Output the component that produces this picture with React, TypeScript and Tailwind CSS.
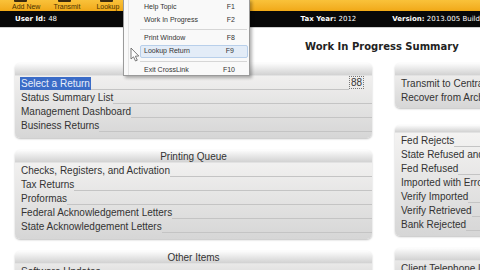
import React from 'react';

const sans = { fontFamily: '"Liberation Sans", Arial, sans-serif' };
const deja = { fontFamily: '"DejaVu Sans", Verdana, sans-serif' };

function Row({ label, right, selected }: { label: string; right?: string; selected?: boolean }) {
  return (
    <div className="flex items-end h-[14px] leading-[13px] text-[10px] text-[#333]">
      <span className={selected ? 'bg-[#3b6cc7] text-[#e8eefa] px-[1px] -ml-[1px]' : 'whitespace-nowrap'}>{label}</span>
      <div className="flex-1 self-stretch border-b border-[#c4c4c4]" />
      {right && (
        <span className="border border-dotted border-[#777] leading-[11px] px-[1px] mr-[8px] mb-[1px]">{right}</span>
      )}
    </div>
  );
}

function Panel({
  title,
  rows,
  headH = 'h-[13px]',
  pb = 'pb-[6px]',
}: {
  title?: string;
  rows: { label: string; right?: string; selected?: boolean }[];
  headH?: string;
  pb?: string;
}) {
  return (
    <div className="rounded-[5px] bg-gradient-to-b from-[#f6f5f4] to-[#d6d6d6] shadow-[0_1px_2px_rgba(0,0,0,0.25)] overflow-hidden">
      <div
        className={`${headH} bg-gradient-to-b from-[#fdfdfd] to-[#d2d2d2] flex items-center justify-center text-[10px] text-[#333] border-b border-[#e2e2e2]`}
      >
        {title}
      </div>
      <div className={`pl-[6px] ${pb}`}>
        {rows.map((r) => (
          <Row key={r.label} {...r} />
        ))}
      </div>
    </div>
  );
}

function Cursor() {
  return (
    <svg className="absolute left-[129px] top-[47px]" width="12" height="16" viewBox="0 0 12 16">
      <path d="M2 1 L2 12 L4.5 9.8 L6.5 14 L8.3 13.2 L6.4 9.2 L9.8 9 Z" fill="#fff" stroke="#555" strokeWidth="0.9" strokeLinejoin="round" opacity="0.85" />
    </svg>
  );
}

function Menu() {
  const item = 'flex items-center justify-between pl-[20px] pr-[14px] h-[12px] text-[7px] text-[#333]';
  const hot = 'flex items-center justify-between ml-[16px] mr-[1px] mt-[1px] pl-[3px] pr-[13px] h-[13px] text-[7px] text-[#333] bg-[#e3ecf7] border border-[#b8cfea] rounded-[2px]';
  return (
    <div
      className="absolute left-[123px] top-[-1px] w-[127px] h-[77px] bg-[#f9f9f9] border border-[#9a9a9a] shadow-[2px_2px_3px_rgba(0,0,0,0.3)] pt-[1px]"
      style={sans}
    >
      <div className="absolute left-[4px] top-0 bottom-0 w-[1px] bg-[#e4e4e4]" />
      <div className={item}><span>Help Topic</span><span>F1</span></div>
      <div className={`${item} mt-[1px]`}><span>Work In Progress</span><span>F2</span></div>
      <div className="ml-[16px] mr-[2px] my-[2.5px] h-[1px] bg-[#d6d6d6]" />
      <div className={item}><span>Print Window</span><span>F8</span></div>
      <div className={hot}>
        <span>Lookup Return</span><span>F9</span>
      </div>
      <div className="ml-[16px] mr-[2px] my-[2.5px] h-[1px] bg-[#d6d6d6]" />
      <div className={item}><span>Exit CrossLink</span><span>F10</span></div>
    </div>
  );
}

export default function App() {
  return (
    <div className="relative w-[480px] h-[270px] overflow-hidden bg-white" style={sans}>
      {/* toolbar */}
      <div className="h-[11px] bg-gradient-to-b from-[#f9c23a] to-[#f1a915] flex items-end pl-[12px] text-[7px] text-[#4a3300] leading-[9px] relative">
        <span>Add New</span>
        <span className="ml-[13px]">Transmit</span>
        <span className="ml-[16px]">Lookup</span>
        <div className="absolute left-[14px] top-0 w-[13px] h-[2px] bg-[#3a2a10] rounded-b-[1px]" />
        <div className="absolute left-[58px] top-0 w-[13px] h-[2px] bg-[#3a2a10] rounded-b-[1px]" />
        <div className="absolute left-[100px] top-0 w-[13px] h-[2px] bg-[#3a2a10] rounded-b-[1px]" />
      </div>
      {/* info bar */}
      <div className="h-[16px] bg-[#080808] flex items-center text-[7px] text-white whitespace-nowrap" style={deja}>
        <div className="pl-[15px] w-[305px]"><b>User Id:</b> 48</div>
        <div className="w-[93px]"><b>Tax Year:</b> 2012</div>
        <div><b>Version:</b> 2013.005 Build</div>
      </div>
      <div className="h-[1px] bg-[#cfcfcf]" />

      <div className="flex gap-[23px] pl-[15px] pt-[35px]">
        <div className="w-[357px] flex flex-col gap-[12px] shrink-0">
          <Panel
            rows={[
              { label: 'Select a Return', right: '88', selected: true },
              { label: 'Status Summary List' },
              { label: 'Management Dashboard' },
              { label: 'Business Returns' },
            ]}
          />
          <Panel
            title="Printing Queue"
            rows={[
              { label: 'Checks, Registers, and Activation' },
              { label: 'Tax Returns' },
              { label: 'Proformas' },
              { label: 'Federal Acknowledgement Letters' },
              { label: 'State Acknowledgement Letters' },
            ]}
          />
          <Panel title="Other Items" rows={[{ label: 'Software Updates' }]} />
        </div>
        <div className="w-[120px] flex flex-col shrink-0">
          <Panel
            pb="pb-[4px]"
            rows={[{ label: 'Transmit to Central Site' }, { label: 'Recover from Archive' }]}
          />
          <div className="mt-[17px]">
            <Panel
              headH="h-[8px]"
              pb="pb-[5px]"
              rows={[
                { label: 'Fed Rejects' },
                { label: 'State Refused and Rejected' },
                { label: 'Fed Refused' },
                { label: 'Imported with Errors' },
                { label: 'Verify Imported' },
                { label: 'Verify Retrieved' },
                { label: 'Bank Rejected' },
              ]}
            />
          </div>
          <div className="mt-[12px]">
            <Panel rows={[{ label: 'Client Telephone Log' }]} />
          </div>
        </div>
      </div>

      {/* title */}
      <div className="absolute left-[305px] top-[39px] text-[10px] font-bold text-[#222]" style={deja}>
        Work In Progress Summary
      </div>

      <Menu />
      <Cursor />
    </div>
  );
}
